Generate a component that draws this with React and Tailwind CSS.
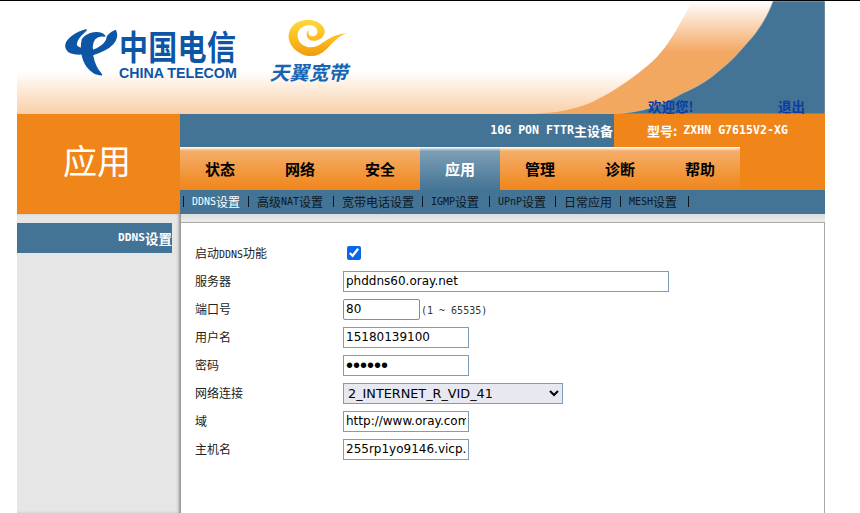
import React from "react";

const CJK = '"Noto Sans CJK SC"';
const tabs = ["状态", "网络", "安全", "应用", "管理", "诊断", "帮助"];
const L = ({ children, className = "" }) => (
  <span className={`font-['DejaVu_Sans_Mono'] text-[10px] ${className}`}>{children}</span>
);
const sub = [
  { w: "w-[65px]", c: [<L key="a">DDNS</L>, "设置"] },
  { w: "w-[85px]", c: ["高级", <L key="a">NAT</L>, "设置"] },
  { w: "w-[89px]", c: ["宽带电话设置"] },
  { w: "w-[67px]", c: [<L key="a">IGMP</L>, "设置"] },
  { w: "w-[66px]", c: [<L key="a">UPnP</L>, "设置"] },
  { w: "w-[65px]", c: ["日常应用"] },
  { w: "w-[69px]", c: [<L key="a">MESH</L>, "设置"] },
];

function Row({ label, children }) {
  return (
    <div className="flex h-7 items-center">
      <div className="w-[148px] text-[12px] text-[#222]">{label}</div>
      {children}
    </div>
  );
}

const inputCls =
  "h-[21px] border border-[#7f9db9] bg-white px-[2px] font-['DejaVu_Sans'] text-[12px] text-black outline-none";

function TelecomLogo() {
  return (
    <svg width="60" height="56" viewBox="0 0 180 168" className="-mt-[4px] -ml-[5px] shrink-0">
      <g fill="#0d56a6" stroke="#0d56a6" strokeWidth="5" strokeLinejoin="round">
        <path d="M72 12 C40 20 10 42 12 62 C14 82 50 92 92 74 L88 66 C66 72 42 68 42 54 C42 40 58 24 72 12 Z" />
        <path d="M62 40 C78 20 112 14 128 30 C118 28 106 30 98 38 C88 50 88 70 92 92 C96 115 106 132 118 146 C96 146 70 125 62 90 C58 72 58 55 62 40 Z" />
        <path d="M160 14 C172 40 150 68 90 86 L88 76 C116 66 136 50 136 34 C138 26 148 20 160 14 Z" />
      </g>
    </svg>
  );
}

function SwirlLogo() {
  return (
    <svg width="60" height="41" viewBox="0 0 62 44" preserveAspectRatio="none" className="block">
      <defs>
        <linearGradient id="sw" x1="0" y1="0" x2="0" y2="1">
          <stop offset="0" stopColor="#ffd83a" />
          <stop offset="0.6" stopColor="#fbb81c" />
          <stop offset="1" stopColor="#f09a10" />
        </linearGradient>
      </defs>
      <path
        fill="url(#sw)"
        d="M18 1 C29 0 37 6 38 13 C38 20 31 25 24 23 C18 21 18 14 22 12 C19 17 24 20 28 18 C32 15 31 9 25 7 C16 5 9 11 10 19 C11 28 21 33 30 29 C37 26 43 17 61 15 C52 18 47 25 41 31 C34 39 24 42 15 38 C4 33 -1 23 1 15 C3 7 9 2 18 1 Z"
      />
    </svg>
  );
}

export default function App() {
  return (
    <div
      className="h-[513px] w-[860px] overflow-hidden border-t border-black bg-white pl-[17px]"
      style={{ fontFamily: `${CJK}, sans-serif` }}
    >
      <div className="flex h-full w-[808px] flex-col">
        {/* banner */}
        <div className="relative flex h-[113px] shrink-0 bg-linear-to-b from-white from-[62%] to-[#f9cfa6]">
          <svg className="absolute inset-0" width="808" height="113" viewBox="0 0 808 113">
            <defs>
              <linearGradient id="or" x1="0" y1="0" x2="0" y2="1">
                <stop offset="0" stopColor="#ffffff" />
                <stop offset="0.45" stopColor="#f3a862" />
                <stop offset="1" stopColor="#f3a860" />
              </linearGradient>
            </defs>
            <path
              fill="url(#or)"
              d="M675 0 C669 12 655 40 640 56 C628 68 600 90 573 102 C555 109 540 112 515 113 L760 113 L760 0 Z"
            />
            <path
              fill="#437395"
              stroke="#c9c4b8"
              strokeWidth="0.6"
              d="M756 0 C752 12 742 30 730 42 C720 54 712 62 703 69 C692 79 680 86 666 92 C652 100 640 105 626 109 C612 112 600 113 586 113 L808 113 L808 0 Z"
            />
          </svg>
          <div className="relative flex flex-1 items-start pl-[50px]">
            <div className="mt-[29px] flex">
              <TelecomLogo />
              <div className="-ml-[3px] flex flex-col">
                <div className="h-[36px] origin-bottom scale-y-[1.18] text-[29px] leading-[36px] font-bold tracking-[0.3px] whitespace-nowrap text-[#0d56a6]">
                  中国电信
                </div>
                <div className="mt-[1px] font-['Liberation_Sans'] text-[14.2px] leading-[13px] font-bold whitespace-nowrap text-[#0d56a6]">
                  CHINA TELECOM
                </div>
              </div>
            </div>
            <div className="mt-[18px] ml-[32px] flex w-[80px] flex-col items-center">
              <div className="ml-[18px]">
                <SwirlLogo />
              </div>
              <div className="mt-[1px] text-[19.5px] leading-[22px] font-bold whitespace-nowrap text-[#1565b4] italic">
                天翼宽带
              </div>
            </div>
          </div>
          <div className="relative flex items-end text-[13.5px] leading-[15px] font-bold text-[#0a3ca5]">
            <span className="w-[130px]">欢迎您!</span>
            <span className="mr-[20px]">退出</span>
          </div>
        </div>

        {/* top band */}
        <div className="flex h-[100px] shrink-0">
          <div className="flex w-[163px] items-center justify-center bg-[#f0851a] pr-[3px] pb-[10px] text-[34px] text-white">
            应用
          </div>
          <div className="flex flex-1 flex-col bg-[#437395]">
            <div className="flex h-[33px] shrink-0 justify-end">
              <div className="flex items-center font-bold text-white">
                <span className="font-['DejaVu_Sans_Mono'] text-[11.6px]">10G PON FTTR</span>
                <span className="text-[13px]">主设备</span>
              </div>
              <div className="ml-[1px] flex w-[211px] items-center bg-[#f0851a] pl-[33px] font-bold text-white">
                <span className="text-[13px]">型号:</span>
                <span className="ml-[6px] font-['DejaVu_Sans_Mono'] text-[11.6px] whitespace-nowrap">
                  ZXHN G7615V2-XG
                </span>
              </div>
            </div>
            <div className="flex h-[43px] shrink-0 bg-[#f0851a]">
              {tabs.map((t) => (
                <div
                  key={t}
                  className={
                    t === "应用"
                      ? "flex h-full w-20 items-center justify-center bg-[linear-gradient(to_bottom,#ffffff_0,#7d9fb6_4px,#437395_100%)] pt-[1px] text-[15px] font-bold text-white"
                      : "flex h-full w-20 items-center justify-center bg-[linear-gradient(to_bottom,#ffffff_0,#f4ae68_4px,#f0851a_100%)] pt-[1px] text-[15px] font-bold text-black"
                  }
                >
                  {t}
                </div>
              ))}
            </div>
            <div className="flex h-[24px] shrink-0 items-center pb-[1px] pl-[3px] text-[12px] text-[#0c1722]">
              {sub.map((s, i) => (
                <div
                  key={i}
                  className={`flex h-[11px] items-center border-l border-l-[#0c1722] pl-2 leading-[11px] whitespace-nowrap ${s.w} ${
                    i === 0 ? "text-white" : ""
                  } ${i === 6 ? "border-r border-r-[#0c1722]" : ""}`}
                >
                  {s.c}
                </div>
              ))}
            </div>
          </div>
        </div>

        {/* body */}
        <div className="flex min-h-0 flex-1">
          <div className="w-[164px] shrink-0 bg-[#e6e6e6] pt-[9px] shadow-[inset_-3px_0_3px_-1px_#8f8f8f]">
            <div className="flex h-[30px] w-[155px] items-center justify-end bg-[#437395] font-bold text-white">
              <span className="font-['DejaVu_Sans_Mono'] text-[11.2px]">DDNS</span>
              <span className="text-[13.5px]">设置</span>
            </div>
          </div>
          <div className="flex min-w-0 flex-1 flex-col">
            <div className="h-[8px] shrink-0 bg-linear-to-b from-[#dcdcdc] to-[#ececec]"></div>
            <div className="flex-1 border-t border-r border-[#aaaaaa] bg-white pt-[16px] pl-[14px]">
              <Row
                label={
                  <>
                    启动<L>DDNS</L>功能
                  </>
                }
              >
                <input
                  type="checkbox"
                  checked
                  readOnly
                  className="ml-[4px] h-[14px] w-[14px] accent-[#0a66e8]"
                />
              </Row>
              <Row label="服务器">
                <input readOnly value="phddns60.oray.net" className={`${inputCls} w-[326px]`} />
              </Row>
              <Row label="端口号">
                <input
                  readOnly
                  value="80"
                  className={`${inputCls} w-[77px] rounded-[2px] border-[#8a8a9a]`}
                />
                <span className="ml-[1px] text-[12px] text-[#333]">
                  <L>(1 ~ 65535)</L>
                </span>
              </Row>
              <Row label="用户名">
                <input readOnly value="15180139100" className={`${inputCls} w-[126px]`} />
              </Row>
              <Row label="密码">
                <input
                  readOnly
                  type="password"
                  value="123456"
                  className="h-[21px] w-[126px] border border-[#7f9db9] bg-white px-[2px] font-['Liberation_Sans'] text-[20px] text-black outline-none"
                />
              </Row>
              <Row label="网络连接">
                <select className="h-[21px] w-[220px] border border-[#7f9db9] bg-[#e8e8f0] font-['DejaVu_Sans'] text-[12.8px] text-black outline-none">
                  <option>2_INTERNET_R_VID_41</option>
                </select>
              </Row>
              <Row label="域">
                <input readOnly value="http://www.oray.com" className={`${inputCls} w-[126px]`} />
              </Row>
              <Row label="主机名">
                <input readOnly value="255rp1yo9146.vicp.net" className={`${inputCls} w-[126px]`} />
              </Row>
            </div>
          </div>
        </div>
      </div>
    </div>
  );
}
